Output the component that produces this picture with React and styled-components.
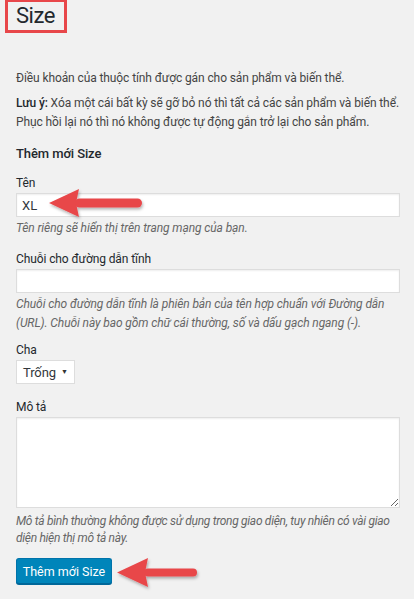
import React from 'react'
import styled, { createGlobalStyle } from 'styled-components'

const GlobalStyle = createGlobalStyle`
  html, body {
    margin: 0;
    padding: 0;
    background: #f1f1f1;
  }
  body {
    font-family: Roboto, "Noto Sans", Arial, sans-serif;
    font-size: 12px;
    letter-spacing: -0.1px;
    color: #444;
  }
`

const Page = styled.div`
  position: relative;
  width: 414px;
  height: 599px;
  overflow: hidden;
  padding: 0 14px 0 16px;
  box-sizing: border-box;
`

const TitleBox = styled.div`
  display: flex;
  align-items: center;
  width: fit-content;
  margin-left: -11px;
  border: 3px solid #e8474a;
  border-top-width: 2px;
  padding: 0 9px 0 8px;
  height: 33px;
  box-sizing: border-box;
`

const Title = styled.h1`
  margin: 0;
  font-size: 22px;
  font-weight: 400;
  letter-spacing: -0.5px;
  line-height: 28px;
  color: #23282d;
`

const Text = styled.p`
  margin: ${p => p.$mt || 0}px 0 0;
  line-height: 19px;
  color: #444;

  strong {
    font-weight: 500;
    color: #23282d;
  }
`

const Heading = styled.h2`
  margin: ${p => p.$mt || 0}px 0 0;
  font-size: 13px;
  font-weight: 500;
  line-height: 19px;
  color: #23282d;
`

const Label = styled.label`
  display: block;
  margin-top: ${p => p.$mt || 0}px;
  line-height: 19px;
  color: #23282d;
`

const Input = styled.input`
  display: block;
  width: 100%;
  height: 24px;
  margin: 0;
  padding: 0 5px;
  box-sizing: border-box;
  border: 1px solid #ddd;
  box-shadow: inset 0 1px 2px rgba(0, 0, 0, 0.07);
  background: #fff;
  font: inherit;
  font-size: 13px;
  color: #32373c;
  outline: none;
`

const Hint = styled.p`
  margin: ${p => p.$mt || 0}px 0 0;
  font-style: italic;
  line-height: ${p => p.$lh || 19}px;
  letter-spacing: ${p => p.$ls ?? -0.1}px;
  color: #666;
`

const Select = styled.div`
  display: flex;
  align-items: center;
  gap: 5px;
  width: fit-content;
  height: 24px;
  padding: 0 6px 0 6px;
  box-sizing: border-box;
  border: 1px solid #ddd;
  background: #fff;
  font-size: 13px;
  color: #32373c;

  span {
    font-size: 7px;
    color: #333;
  }
`

const TextArea = styled.textarea`
  display: block;
  width: 100%;
  height: 91px;
  margin: 0;
  box-sizing: border-box;
  border: 1px solid #ddd;
  box-shadow: inset 0 1px 2px rgba(0, 0, 0, 0.07);
  background: #fff;
  font: inherit;
  outline: none;
`

const Button = styled.button`
  display: block;
  margin-top: ${p => p.$mt || 0}px;
  height: 26px;
  width: 96px;
  padding: 0;
  border: 1px solid #0073aa;
  border-bottom-color: #006799;
  border-radius: 3px;
  box-shadow: 0 1px 0 #006799;
  background: #0085ba;
  color: #fff;
  font: inherit;
  font-size: 12.5px;
  cursor: pointer;
`

const ArrowSvg = styled.svg`
  position: absolute;
  left: ${p => p.$x}px;
  top: ${p => p.$y}px;
  overflow: visible;
  pointer-events: none;
`

const Arrow = ({ id, x, y, head, len, half, thick }) => (
  <ArrowSvg $x={x} $y={y} width={len} height={half * 2}>
    <defs>
      <filter id={id} x="-20%" y="-50%" width="140%" height="200%">
        <feDropShadow dx="1" dy="2" stdDeviation="1.5" floodColor="#000" floodOpacity="0.3" />
      </filter>
    </defs>
    <g filter={`url(#${id})`} fill="#e8474a">
      <polygon points={`0,${half} ${head},0 ${head - 3},${half} ${head},${half * 2}`} />
      <rect x={head - 4} y={half - thick / 2} width={len - head + 4} height={thick} rx={thick / 2} />
    </g>
  </ArrowSvg>
)

const App = () => {
  return (
    <>
      <GlobalStyle />
      <Page>
        <TitleBox>
          <Title>Size</Title>
        </TitleBox>

        <Text $mt={36}>Điều khoản của thuộc tính được gán cho sản phẩm và biến thể.</Text>
        <Text $mt={6}>
          <strong>Lưu ý:</strong> Xóa một cái bất kỳ sẽ gỡ bỏ nó thì tất cả các sản phẩm và biến thể.
          Phục hồi lại nó thì nó không được tự động gắn trở lại cho sản phẩm.
        </Text>

        <Heading $mt={12}>Thêm mới Size</Heading>

        <Label $mt={11}>Tên</Label>
        <Input defaultValue="XL" />
        <Hint $mt={2}>Tên riêng sẽ hiển thị trên trang mạng của bạn.</Hint>

        <Label $mt={12}>Chuỗi cho đường dẫn tĩnh</Label>
        <Input />
        <Hint $mt={2}>
          Chuỗi cho đường dẫn tĩnh là phiên bản của tên hợp chuẩn với Đường dẫn (URL). Chuỗi này bao gồm chữ cái thường, số và dấu gạch ngang (-).
        </Hint>

        <Label $mt={8}>Cha</Label>
        <Select>Trống <span>▼</span></Select>

        <Label $mt={14}>Mô tả</Label>
        <TextArea />
        <Hint $mt={5} $lh={17} $ls={-0.3}>
          Mô tả bình thường không được sử dụng trong giao diện, tuy nhiên có vài giao diện hiện thị mô tả này.
        </Hint>

        <Button $mt={11}>Thêm mới Size</Button>

        <Arrow id="a1" x={49} y={189} head={30} len={93} half={14} thick={9} />
        <Arrow id="a2" x={117} y={558} head={31} len={80} half={14.5} thick={8} />
      </Page>
    </>
  )
}

export default App
